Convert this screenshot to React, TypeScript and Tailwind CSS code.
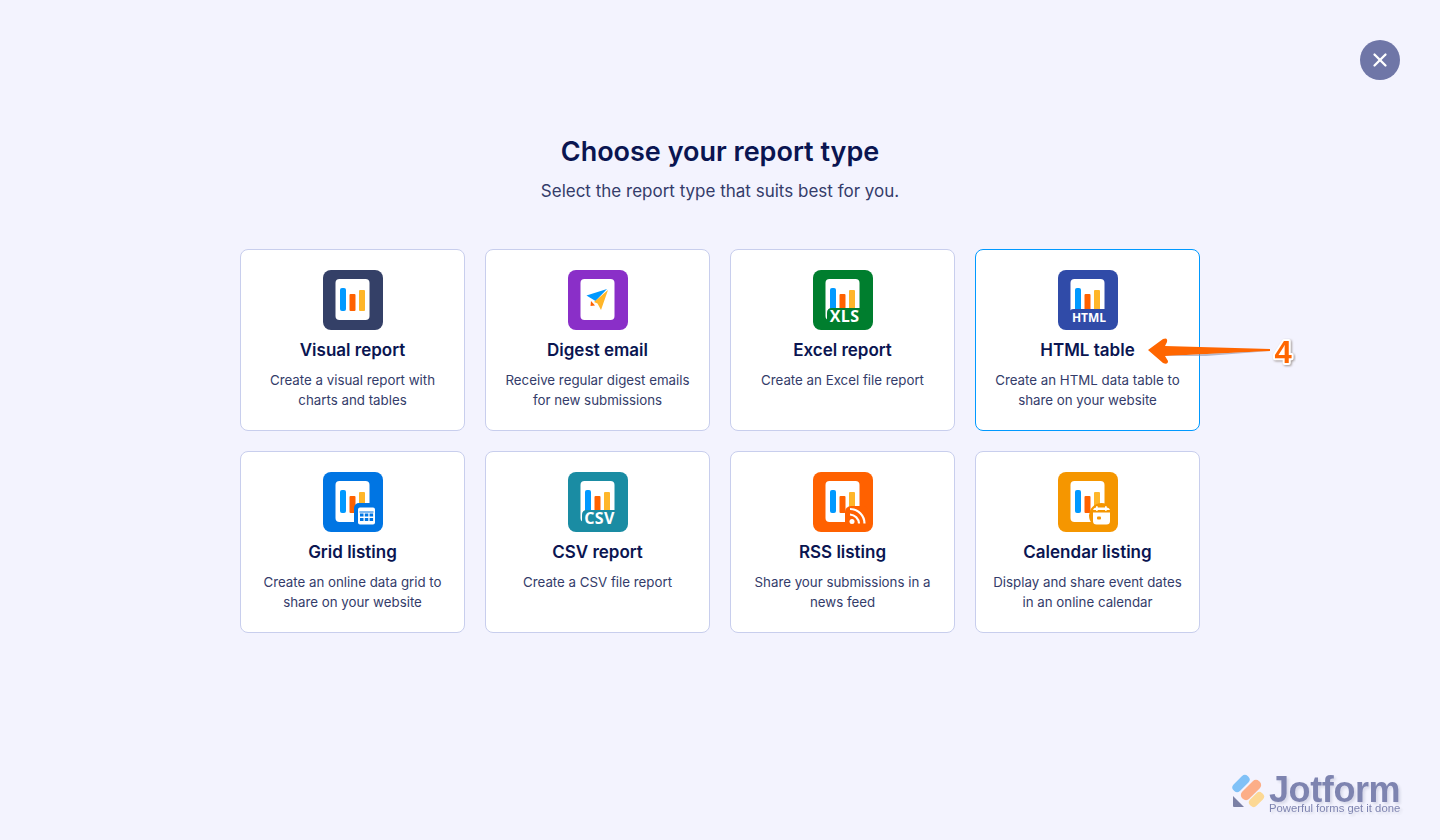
import { X } from "lucide-react";
import type { ReactNode } from "react";

function Bars() {
  return (
    <>
      <rect x="17" y="18" width="6" height="23" rx="2" fill="#0099ff" />
      <rect x="26.5" y="24" width="6" height="17" rx="1" fill="#ff6100" />
      <rect x="36" y="20" width="6" height="21" rx="1" fill="#ffb629" />
    </>
  );
}

function Tile({ bg, children }: { bg: string; children?: ReactNode }) {
  return (
    <svg width="60" height="60" viewBox="0 0 60 60">
      <rect width="60" height="60" rx="8" fill={bg} />
      <rect x="12.5" y="9" width="34" height="41" rx="4" fill="#fff" />
      <Bars />
      {children}
    </svg>
  );
}

const labelFont = { fontFamily: "'Open Sans', sans-serif" };

function VisualIcon() {
  return <Tile bg="#344067" />;
}

function DigestIcon() {
  return (
    <svg width="60" height="60" viewBox="0 0 60 60">
      <rect width="60" height="60" rx="8" fill="#8a2fc8" />
      <rect x="12.5" y="9" width="34" height="41" rx="4" fill="#fff" />
      <path d="M18.500 25.500 L39 19 L27.500 31 Z" fill="#0099ff" />
      <path d="M40 20 L33 40 L29.500 33.500 L26 32 Z" fill="#ffb629" />
      <path d="M23 31 L27 35.500 L22.500 36 Z" fill="#ff6100" />
    </svg>
  );
}

function BadgeIcon({ bg, label }: { bg: string; label: string }) {
  return (
    <Tile bg={bg}>
      <path d="M14 54 V43 Q14 38 19 38 H50 Q53 38 53 42 V54 Z" fill={bg} />
      <text x="31.500" y="52" textAnchor="middle" fill="#fff" fontSize="16" fontWeight="700" letterSpacing="0.4" style={labelFont}>
        {label}
      </text>
    </Tile>
  );
}

function HtmlIcon() {
  return (
    <Tile bg="#304ba8">
      <path d="M11 54 V44 Q11 39 16 39 H51 V54 Z" fill="#304ba8" />
      <text x="31" y="52" textAnchor="middle" fill="#fff" fontSize="12" fontWeight="700" style={labelFont}>
        HTML
      </text>
    </Tile>
  );
}

function GridIcon() {
  return (
    <Tile bg="#0075e3">
      <rect x="31" y="31" width="25" height="25" rx="5" fill="#0075e3" />
      <rect x="35" y="35.500" width="17" height="17" rx="2" fill="#fff" />
      <rect x="36.500" y="39.500" width="14" height="1" fill="#0075e3" />
      <g fill="#0075e3">
        <rect x="37" y="41.500" width="3.500" height="3" />
        <rect x="41.800" y="41.500" width="3.500" height="3" />
        <rect x="46.600" y="41.500" width="3.500" height="3" />
        <rect x="37" y="46" width="3.500" height="3" />
        <rect x="41.800" y="46" width="3.500" height="3" />
        <rect x="46.600" y="46" width="3.500" height="3" />
      </g>
    </Tile>
  );
}

function RssIcon() {
  return (
    <Tile bg="#ff6100">
      <rect x="32" y="34" width="24" height="22" rx="6" fill="#ff6100" />
      <circle cx="39" cy="49.500" r="2.500" fill="#fff" />
      <path d="M37 42.500 A9.500 9.500 0 0 1 46 51.500" stroke="#fff" strokeWidth="2.200" fill="none" />
      <path d="M37 37 A14.500 14.500 0 0 1 51.500 51.500" stroke="#fff" strokeWidth="2.200" fill="none" />
    </Tile>
  );
}

function CalendarIcon() {
  return (
    <Tile bg="#f59600">
      <circle cx="43.500" cy="43.500" r="12.500" fill="#f59600" />
      <rect x="35" y="35.500" width="17" height="17" rx="3.500" fill="#fff" />
      <rect x="35" y="38" width="17" height="2.500" fill="#f59600" />
      <rect x="38" y="34" width="1.800" height="5" rx="0.900" fill="#fff" />
      <rect x="47" y="34" width="1.800" height="5" rx="0.900" fill="#fff" />
      <rect x="39" y="44.500" width="4" height="3" rx="1" fill="#f59600" />
    </Tile>
  );
}

const reports = [
  { title: "Visual report", desc: ["Create a visual report with", "charts and tables"], icon: <VisualIcon /> },
  { title: "Digest email", desc: ["Receive regular digest emails", "for new submissions"], icon: <DigestIcon /> },
  { title: "Excel report", desc: ["Create an Excel file report"], icon: <BadgeIcon bg="#007e2e" label="XLS" /> },
  { title: "HTML table", desc: ["Create an HTML data table to", "share on your website"], icon: <HtmlIcon />, active: true },
  { title: "Grid listing", desc: ["Create an online data grid to", "share on your website"], icon: <GridIcon /> },
  { title: "CSV report", desc: ["Create a CSV file report"], icon: <BadgeIcon bg="#1a8ca3" label="CSV" /> },
  { title: "RSS listing", desc: ["Share your submissions in a", "news feed"], icon: <RssIcon /> },
  { title: "Calendar listing", desc: ["Display and share event dates", "in an online calendar"], icon: <CalendarIcon /> },
];

function Callout() {
  return (
    <svg className="absolute left-[170px] top-[82px]" width="150" height="44" viewBox="0 0 150 44">
      <path d="M2 18 L17 7 Q22 5 21 10 L19 14 L124 17 L124 19 L19 24 L22 29 Q22 33 17 31 Z" fill="#ff6600" />
      <path d="M19 24 L124 19 L60 24 Z" fill="#8a8fa8" opacity="0.6" />
      <text
        x="137"
        y="31"
        textAnchor="middle"
        fontSize="31"
        fontWeight="700"
        fill="#ff6600"
        stroke="#fff"
        strokeWidth="4"
        strokeLinejoin="round"
        paintOrder="stroke"
        className="[filter:drop-shadow(1px_1px_1px_rgba(60,40,20,0.45))]"
        style={{ fontFamily: "'Liberation Sans', sans-serif" }}
      >
        4
      </text>
    </svg>
  );
}

function Logo() {
  return (
    <div className="absolute left-[1232px] top-[772px] flex items-start">
      <svg width="36" height="38" viewBox="0 0 36 38" className="opacity-80">
        <rect x="-1" y="7" width="20" height="9" rx="4" transform="rotate(-45 9 11.500)" fill="#64b5f6" />
        <rect x="7" y="13" width="24" height="10" rx="4.500" transform="rotate(-45 19 18)" fill="#ff9e6b" />
        <rect x="16" y="23" width="17" height="9" rx="4" transform="rotate(-45 24.500 27.500)" fill="#ffd27a" />
        <path d="M1 24 L12 35 H2 Q1 35 1 34 Z" fill="#5e648f" />
      </svg>
      <div className="ml-[1px] flex flex-col font-['Liberation_Sans',sans-serif] text-[#7278a8] [text-shadow:2px_2px_3px_rgba(30,40,90,0.15)]">
        <span className="h-[29px] text-[36px] font-bold leading-[36px] tracking-[-0.4px] opacity-90">Jotform</span>
        <span className="text-[11.300px] leading-[14px] opacity-90">Powerful forms get it done</span>
      </div>
    </div>
  );
}

export default function App() {
  return (
    <div className="relative h-[840px] overflow-hidden bg-[#f3f3fe] font-['Inter',sans-serif]">
      <button className="absolute right-[40px] top-[40px] flex h-10 w-10 items-center justify-center rounded-full bg-[#6f76a7] text-white">
        <X size={22} strokeWidth={2.500} />
      </button>

      <div className="flex flex-col items-center pt-[133px]">
        <h1 className="text-[27px] font-semibold leading-[38px] text-[#0a1551]">Choose your report type</h1>
        <p className="mt-[10px] text-[17px] leading-5 text-[#343c6a]">Select the report type that suits best for you.</p>

        <div className="mt-[48px] grid w-[960px] grid-cols-4 gap-5">
          {reports.map((r) => (
            <div
              key={r.title}
              className={`relative flex h-[182px] flex-col items-center rounded-lg border bg-white pt-5 ${
                r.active ? "border-[#0099ff]" : "border-[#c8ceed]"
              }`}
            >
              {r.icon}
              <h2 className="mt-[9px] text-[17px] font-semibold leading-[22px] text-[#0a1551]">{r.title}</h2>
              <p className="mt-[9px] text-center text-[13.300px] leading-5 text-[#343c6a]">
                {r.desc.map((line) => (
                  <span key={line} className="block">
                    {line}
                  </span>
                ))}
              </p>
              {r.active && <Callout />}
            </div>
          ))}
        </div>
      </div>

      <Logo />
    </div>
  );
}
